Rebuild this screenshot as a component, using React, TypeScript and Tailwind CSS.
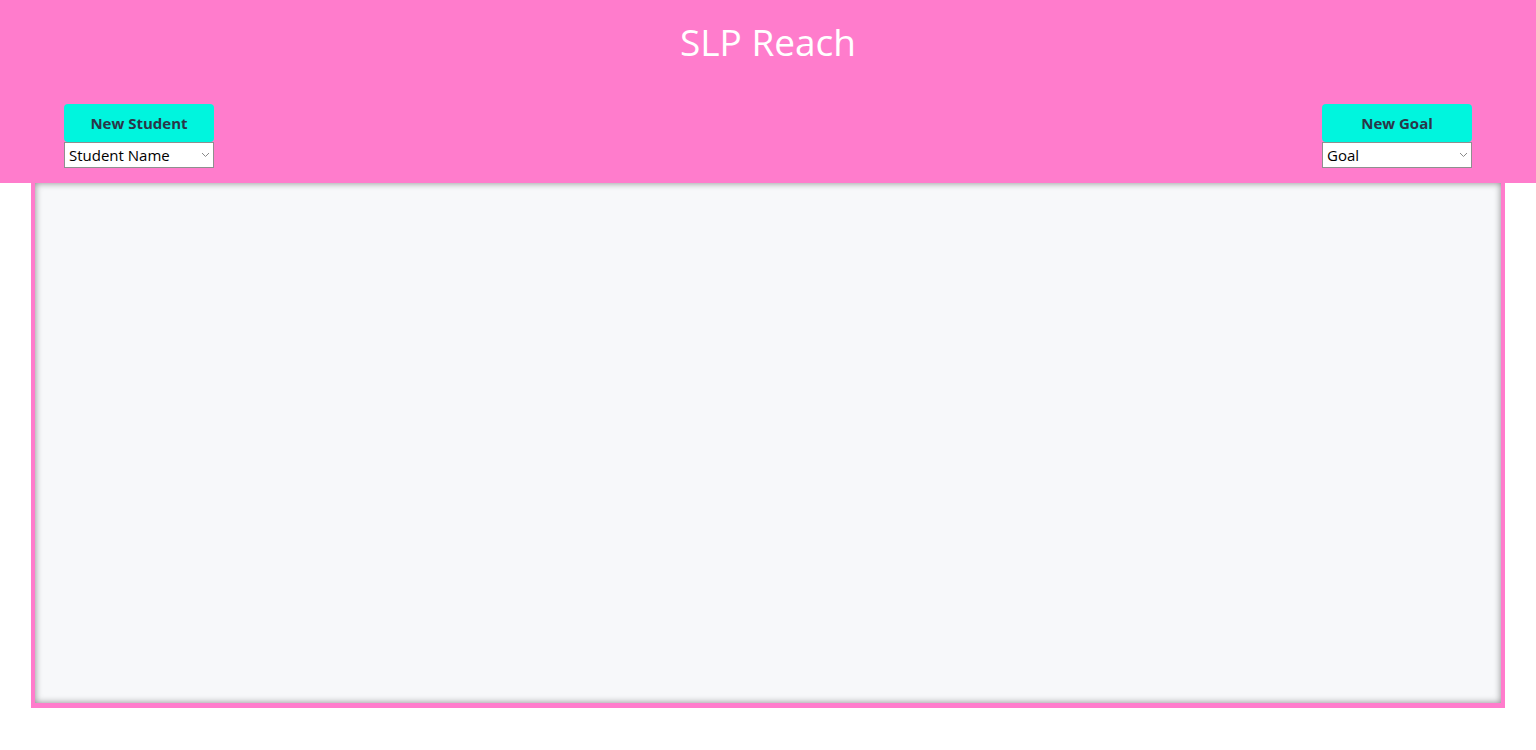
const Chevron = () => (
  <svg
    className="pointer-events-none absolute right-[4px] top-1/2 -translate-y-1/2"
    width="9"
    height="6"
    viewBox="0 0 9 6"
    fill="none"
  >
    <path d="M1 1l3.5 3.5L8 1" stroke="#8a8a8a" strokeWidth="1" />
  </svg>
);

interface PickerProps {
  label: string;
  placeholder: string;
}

const Picker = ({ label, placeholder }: PickerProps) => (
  <div className="flex w-[150px] flex-col">
    <button className="h-[38px] w-full rounded-[4px] bg-[#00f5de] text-[15px] font-bold text-[#2b3548]">
      {label}
    </button>
    <div className="relative">
      <select className="h-[26px] w-full appearance-none border border-[#8f8f8f] bg-white pl-[4px] text-[15px] text-black outline-none">
        <option>{placeholder}</option>
      </select>
      <Chevron />
    </div>
  </div>
);

export default function App() {
  return (
    <div
      className="min-h-[750px] bg-white"
      style={{ fontFamily: '"Open Sans", "Noto Sans", sans-serif' }}
    >
      {/* Header */}
      <header className="h-[183px] bg-[#ff7ccc] pt-[16px]">
        <h1 className="text-center text-[37px] leading-[52px] text-white">
          SLP Reach
        </h1>
        <div className="mt-[36px] flex justify-between pl-[64px] pr-[64px]">
          <Picker label="New Student" placeholder="Student Name" />
          <Picker label="New Goal" placeholder="Goal" />
        </div>
      </header>

      {/* Workspace */}
      <main className="mx-auto h-[525px] w-[96%] border-x-4 border-b-[5px] border-[#ff7ccc] bg-[#f7f8fa] shadow-[inset_0_0_7px_rgba(0,0,0,0.45)]" />
    </div>
  );
}
